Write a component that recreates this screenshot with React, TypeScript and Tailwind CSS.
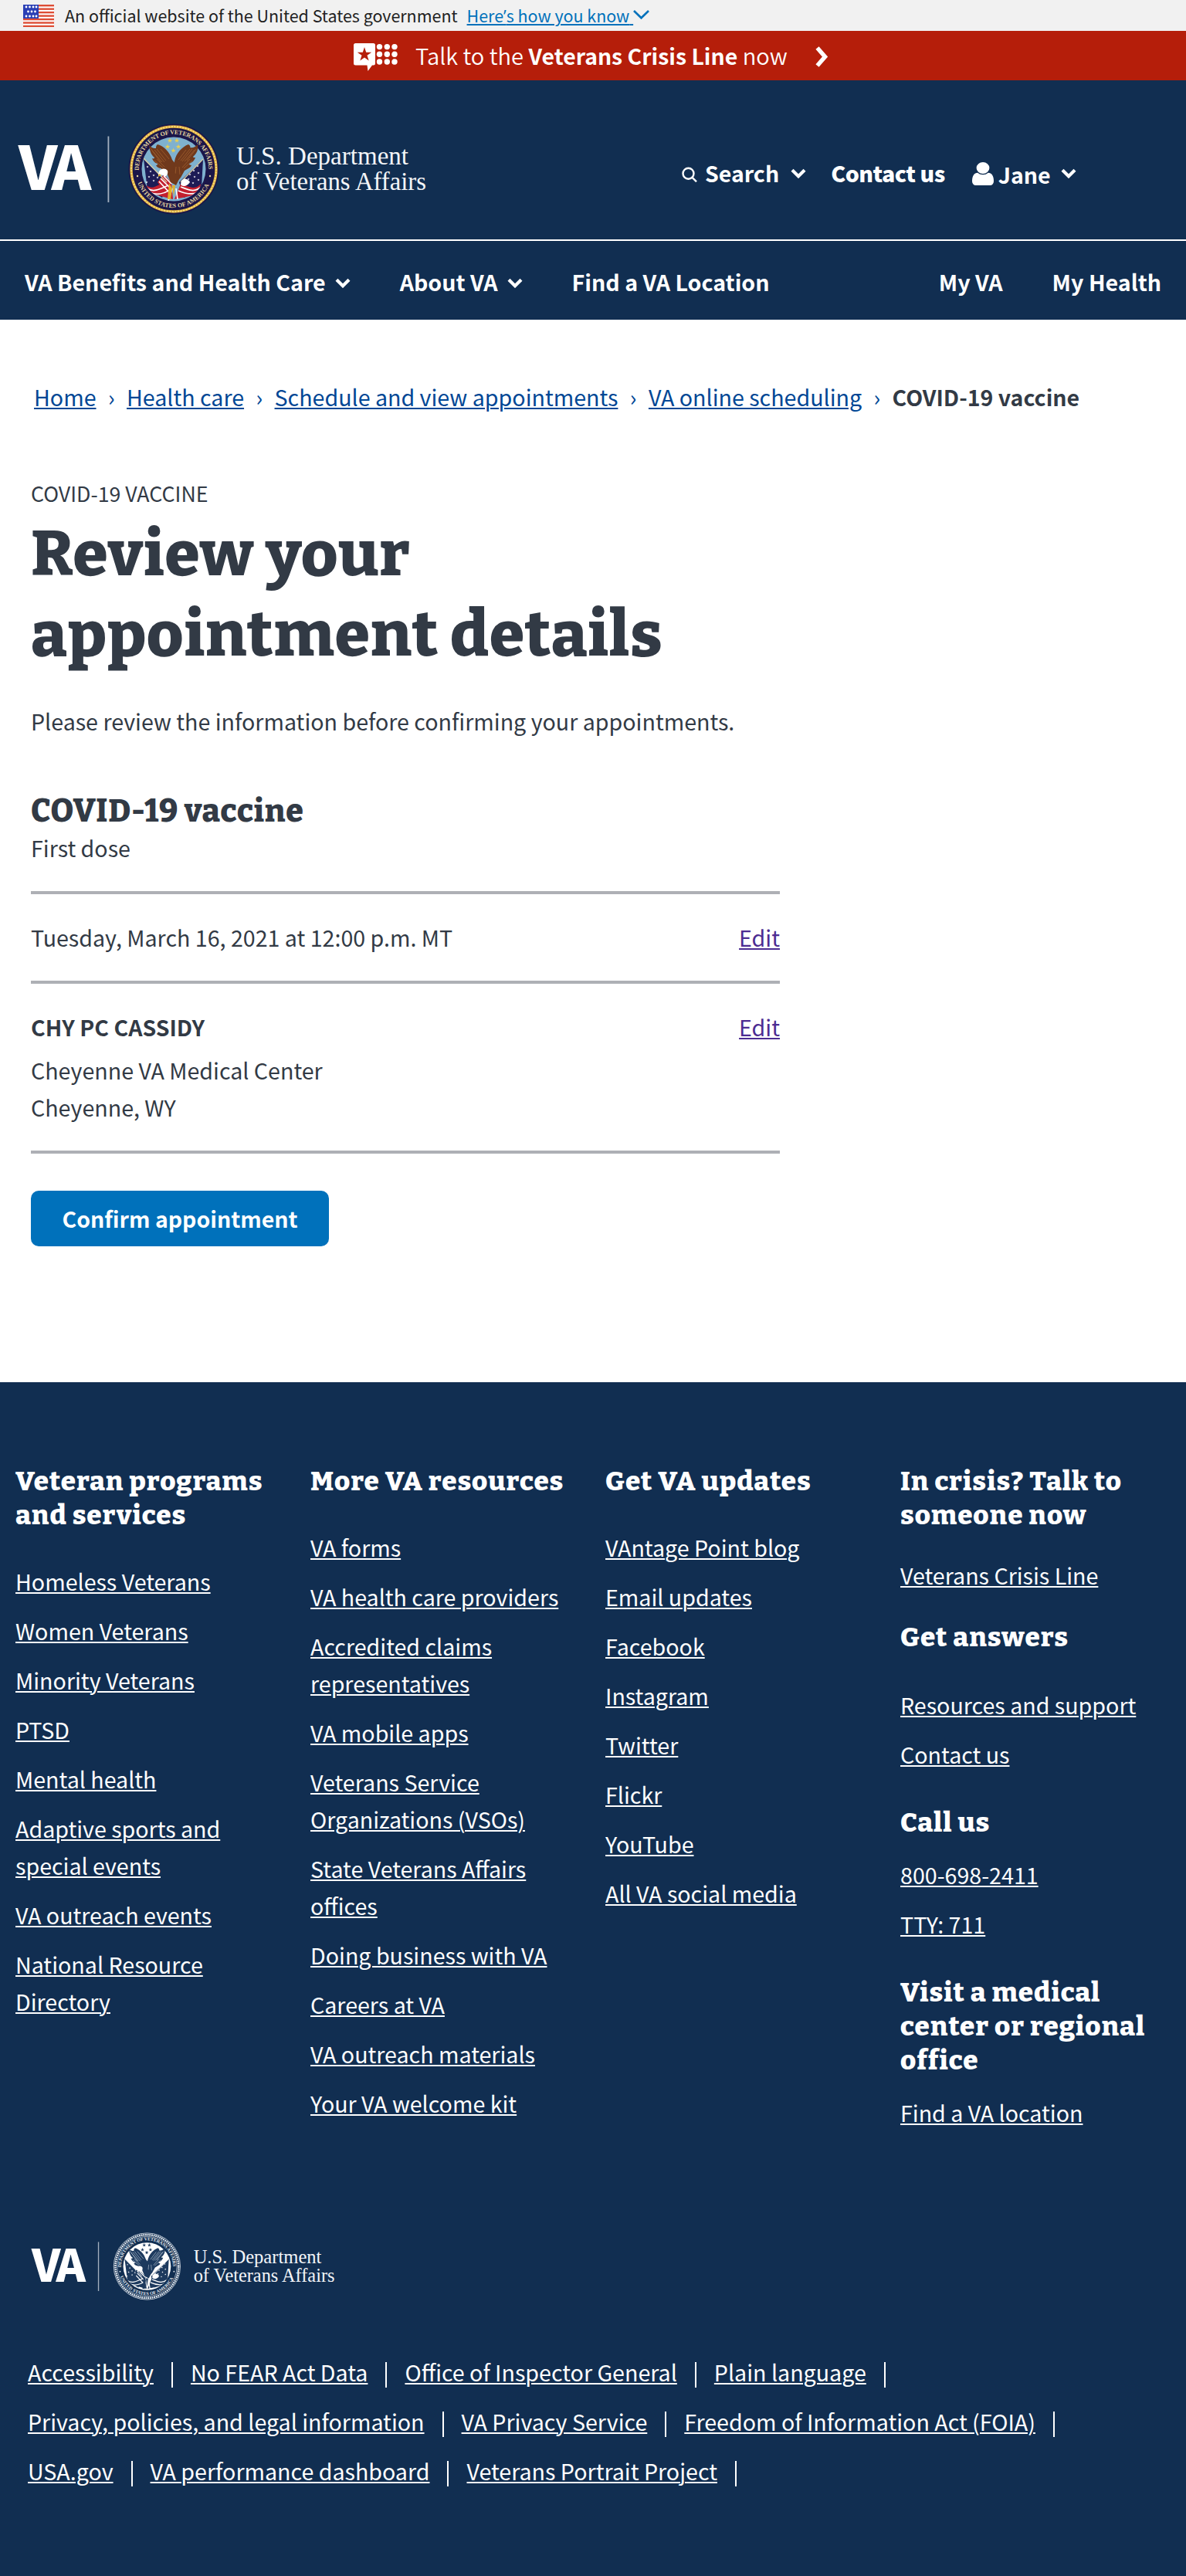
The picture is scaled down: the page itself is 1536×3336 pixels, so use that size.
import { Fragment } from 'react';

const STRIPES = [0, 1, 2, 3, 4, 5, 6];

function UsFlag() {
  return (
    <svg className="h-[29px] w-10" viewBox="0 0 40 29" aria-hidden="true">
      <rect width="40" height="29" fill="#fff" />
      {STRIPES.map((i) => (
        <rect key={i} y={i * 4.46} width="40" height="2.4" fill="#dd4d35" />
      ))}
      <rect width="20" height="18" fill="#2a3fb5" />
      {[3, 9, 15].map((y, r) =>
        (r === 1 ? [6.5, 11, 15.5] : [4, 8.5, 13, 17]).map((x) => (
          <circle key={`${x}-${y}`} cx={x} cy={y} r="1.4" fill="#fff" />
        )),
      )}
    </svg>
  );
}

function Chevron({ className }: { className: string }) {
  return (
    <svg className={className} viewBox="0 0 20 13" fill="none" stroke="currentColor" strokeWidth="4.2" aria-hidden="true">
      <path d="M2 2.2 10 10.2 18 2.2" />
    </svg>
  );
}

function CrisisIcon() {
  return (
    <svg className="h-9 w-[57px]" viewBox="0 0 57 36" fill="#fff" aria-hidden="true">
      <path d="M2.500 0h23A2.500 2.500 0 0 1 28 2.500V26a2.500 2.500 0 0 1-2.500 2.500H24L18.500 36 17.500 28.500H2.500A2.500 2.500 0 0 1 0 26V2.500A2.500 2.500 0 0 1 2.500 0Z" />
      <path fill="#b51e0a" d="m14 5 2.200 6.700h7l-5.700 4.100 2.200 6.800L14 18.400l-5.700 4.200 2.200-6.800L4.800 11.700h7Z" />
      {[4.600, 14.300, 24].map((y) => [33.500, 43.300, 53].map((x) => <circle key={`${x}-${y}`} cx={x} cy={y} r="3.700" />))}
    </svg>
  );
}

function Star({ x, y, s, fill }: { x: number; y: number; s: number; fill: string }) {
  return (
    <path
      transform={`translate(${x} ${y}) scale(${s})`}
      fill={fill}
      d="M0-1 .24-.32.95-.31.38.12.59.81 0 .4-.59.81-.38.12-.95-.31-.24-.32Z"
    />
  );
}

const FEATHERS_LEFT =
  'M27 28C31 32 33 32 36 32 36 30 36 29 38 27 46 29 54 37 57 47L62 53 62 70 52 66C46 62 42 60 43 58 39 58 37 56 36 54 38 54 38 53 38 52 34 51 32 48 31 45 33 46 34 45 34 44 30 41 28 36 27 28Z';
const FEATHERS_RIGHT =
  'M90 27C86 31 84 32 80 31 81 30 80 28 78 27 70 30 62 38 60 49L58 60 62 76 68 70 73 61C78 58 81 57 82 54 80 54 79 53 79 52 84 50 86 47 87 44 85 44 84 44 84 43 89 39 91 34 90 27Z';

function Seal({ mono, id }: { mono?: boolean; id: string }) {
  const ring = mono ? '#112e51' : '#1b1649';
  const gold = mono ? '#e8edf3' : '#dfae3f';
  const letter = mono ? '#e8edf3' : '#e6d9a2';
  const sky = mono ? '#ffffff' : '#7fb1cf';
  const brown = mono ? '#1d3a5e' : '#70391c';
  const feather = mono ? '#c4cfdb' : '#a0602f';
  const navy = mono ? '#1d3a5e' : '#1d1c56';
  const red = mono ? '#1d3a5e' : '#c3202f';
  const star = mono ? '#1d3a5e' : '#e9cf52';
  return (
    <g>
      <circle cx="59" cy="59" r="58.500" fill={ring} />
      <circle cx="59" cy="59" r="58" fill="none" stroke={gold} strokeWidth={mono ? 1 : 0} />
      <circle cx="59" cy="59" r="55" fill="none" stroke={gold} strokeWidth="3.400" strokeDasharray={mono ? '2.400 1.200' : undefined} />
      {!mono && <circle cx="59" cy="59" r="55" fill="none" stroke="#f6dc7c" strokeWidth="2" strokeDasharray="2 1.600" />}
      <circle cx="59" cy="59" r="52" fill="none" stroke={gold} strokeWidth={mono ? 0.8 : 0} />
      <defs>
        <path id={`${id}-top`} d="M14.120 63.700A45.150 45.150 0 1 1 103.900 63.700" />
        <path id={`${id}-bottom`} d="M10 69A50 50 0 0 0 108 69" />
        <clipPath id={`${id}-clip`}>
          <circle cx="59" cy="59" r="41.500" />
        </clipPath>
      </defs>
      <text fill={letter} fontFamily='"Liberation Serif", serif' fontWeight="700" fontSize="7.900">
        <textPath href={`#${id}-top`} startOffset="3" textLength="144">
          DEPARTMENT OF VETERANS AFFAIRS
        </textPath>
      </text>
      <text fill={letter} fontFamily='"Liberation Serif", serif' fontWeight="700" fontSize="7.900">
        <textPath href={`#${id}-bottom`} startOffset="8" textLength="118">
          UNITED STATES OF AMERICA
        </textPath>
      </text>
      <circle cx="12" cy="68" r="1.200" fill={letter} />
      <circle cx="106" cy="68" r="1.200" fill={letter} />
      <circle cx="59" cy="59" r="41.500" fill={sky} />
      <g clipPath={`url(#${id}-clip)`}>
        <path d="M20 46 52 78 44 96C38 92 31 88 25 86Z" fill={navy} />
        <path d="M97 46 66 76 72 96C80 92 88 88 95 83Z" fill={navy} />
        <path d="M24 80C32 88 42 76 52 74L58 98C48 96 38 92 26 90Z" fill={red} />
        <path d="M94 78C86 88 76 80 68 78L60 98C70 96 82 94 92 90Z" fill={red} />
        <path d="M38 76 46 66 56 76 58 98 50 92Z" fill={red} />
        <g stroke="#fff" strokeWidth="1.700" fill="none">
          <path d="M25 84C33 90 43 84 52 80M28 89C36 93 46 91 54 86M42 71 56 85M40 75 55 91M46 68 56 78" />
          <path d="M93 83C85 90 76 85 68 82M91 89C82 93 74 91 65 87M62 84 64 98M57 84 52 100" />
        </g>
        {[[25, 56], [29, 62], [33, 67], [27, 69], [33, 74], [24, 76], [38, 70], [90, 55], [85, 61], [91, 64], [80, 66], [86, 69], [91, 73], [78, 72], [84, 77], [73, 72]].map(([x, y]) => (
          <Star key={`${x}-${y}`} x={x} y={y} s={1.6} fill="#fff" />
        ))}
        <path d="M20 45 50 76M97 46 68 76" stroke={mono ? '#fff' : '#d7cba0'} strokeWidth="1.300" />
      </g>
      <path d={FEATHERS_LEFT} fill={brown} />
      <path d={FEATHERS_RIGHT} fill={brown} />
      <path
        d="M29 32 42 50M31 35 44 50M34 34 47 50M37 33 49 48M42 33 53 46M37 46 47 56M34 48 45 57M86 34 73 49M88 33 76 48M83 33 70 49M80 33 68 48M75 34 65 47M80 46 70 57M83 48 72 58M62 56 61 66M66 56 67 66"
        stroke={feather}
        strokeWidth="0.800"
        fill="none"
      />
      <path d="M50 64C56 62 64 64 67 70L62 80 55 76Z" fill={brown} />
      <path d="M40 62C42 58 48 57 51 61 52 65 50 68 47 69 45 66 42 66 39 68 39 66 39 64 40 62Z" fill="#fff" />
      <path d="M69 74C73 70 78 72 80 76 76 82 70 82 68 79Z" fill="#fff" />
      <path d="M40 65 38.500 69 43 67ZM53 77 51 98H55L57 84ZM57 80 59 94 61 80Z" fill={mono ? '#1d3a5e' : '#e4b02b'} />
      {[[54, 22], [63, 22], [51, 30], [65, 30], [58.5, 35]].map(([x, y]) => (
        <Star key={`${x}-${y}`} x={x} y={y} s={3.4} fill={star} />
      ))}
    </g>
  );
}

/* Wordmark lock-up: VA, rule, department seal and name. */
function VaLogo({ className, mono, id }: { className: string; mono?: boolean; id: string }) {
  return (
    <svg className={className} viewBox="0 0 530 118" role="img" aria-label="U.S. Department of Veterans Affairs">
      <text x="0 42.500" y="86" fill="#fff" fontFamily='"Noto Sans CJK SC", sans-serif' fontWeight="900" fontSize="78.500">
        VA
      </text>
      <rect x="115.500" y="16.500" width="1.800" height="85.500" fill="#a3afbf" />
      <g transform="translate(142 0)">
        <Seal mono={mono} id={id} />
      </g>
      <g fill="#f3f5f8" fontFamily='"Liberation Serif", serif' fontSize="34" fontWeight="400">
        <text x="282" y="53.300" textLength="223" lengthAdjust="spacingAndGlyphs">
          U.S. Department
        </text>
        <text x="282" y="86" textLength="246" lengthAdjust="spacingAndGlyphs">
          of Veterans Affairs
        </text>
      </g>
    </svg>
  );
}

function SearchIcon() {
  return (
    <svg className="h-5 w-5" viewBox="0 0 20 20" fill="none" stroke="#fff" strokeWidth="2.400" aria-hidden="true">
      <circle cx="8.500" cy="8.700" r="7" />
      <path d="M13.300 13.600 19 19.300" />
    </svg>
  );
}

function UserIcon() {
  return (
    <svg className="h-[30px] w-7" viewBox="256 128 1280 1536" preserveAspectRatio="none" fill="#fff" aria-hidden="true">
      <path d="M1536 1399q0 109-62.500 187t-150.500 78h-854q-88 0-150.500-78t-62.500-187q0-85 8.500-160.500t31.500-152 58.500-131 94-89 134.500-34.500q131 128 313 128t313-128q76 0 134.500 34.500t94 89 58.500 131 31.500 152 8.500 160.500zm-256-887q0 159-112.500 271.500t-271.500 112.500-271.500-112.500-112.500-271.500 112.500-271.500 271.500-112.500 271.500 112.500 112.500 271.500z" />
    </svg>
  );
}

const CRUMBS = ['Home', 'Health care', 'Schedule and view appointments', 'VA online scheduling'];

const PROGRAMS = ['Homeless Veterans', 'Women Veterans', 'Minority Veterans', 'PTSD', 'Mental health', 'Adaptive sports and special events', 'VA outreach events', 'National Resource Directory'];
const RESOURCES = ['VA forms', 'VA health care providers', 'Accredited claims representatives', 'VA mobile apps', 'Veterans Service Organizations (VSOs)', 'State Veterans Affairs offices', 'Doing business with VA', 'Careers at VA', 'VA outreach materials', 'Your VA welcome kit'];
const UPDATES = ['VAntage Point blog', 'Email updates', 'Facebook', 'Instagram', 'Twitter', 'Flickr', 'YouTube', 'All VA social media'];
const LEGAL = [
  ['Accessibility', 'No FEAR Act Data', 'Office of Inspector General', 'Plain language'],
  ['Privacy, policies, and legal information', 'VA Privacy Service', 'Freedom of Information Act (FOIA)'],
  ['USA.gov', 'VA performance dashboard', 'Veterans Portrait Project'],
];

function FooterHeading({ children, className = '' }: { children: string; className?: string }) {
  return (
    <h2 className={`font-[Bitter,'DejaVu_Serif_Condensed',serif] text-[35px] leading-[44px] font-extrabold tracking-[0.95px] ${className}`}>
      {children}
    </h2>
  );
}

function LinkList({ items, className = '' }: { items: string[]; className?: string }) {
  return (
    <ul className={`flex flex-col gap-4 ${className}`}>
      {items.map((t) => (
        <li key={t}>
          <a className="underline decoration-2 underline-offset-2">{t}</a>
        </li>
      ))}
    </ul>
  );
}

export default function App() {
  return (
    <div className="flex h-[3336px] w-[1536px] flex-col bg-white font-['Noto_Sans_CJK_SC',sans-serif] text-[28.62px] leading-[48px] text-[#323a45]">
      <header className="flex flex-col text-white">
        <div className="flex h-10 items-start bg-[#f1f1f1] pl-[30px] text-[21.44px] leading-10 text-[#212121]">
          <div className="pt-[6px]">
            <UsFlag />
          </div>
          <span className="ml-[14px] leading-[39px]">An official website of the United States government</span>
          <a className="ml-[12px] flex items-start text-[#0071bb]">
            <span className="leading-[39px] whitespace-pre underline decoration-2 underline-offset-2">
              Here<span className="font-['Open_Sans']">’</span>s how you know{' '}
            </span>
            <svg className="mt-[13px] h-3 w-[21px]" viewBox="0 0 21 12" fill="none" stroke="currentColor" strokeWidth="2.600" aria-hidden="true">
              <path d="M1 1 10.500 10.300 20 1" />
            </svg>
          </a>
        </div>

        <div className="flex h-16 items-start bg-[#b51e0a] pl-[458px]">
          <div className="pt-4">
            <CrisisIcon />
          </div>
          <span className="ml-[23px] pt-[7px] text-[29.1px] font-[350] whitespace-nowrap">
            Talk to the <b className="text-[28.4px] font-bold">Veterans Crisis Line</b> now
          </span>
          <svg className="mt-5 ml-[36px] h-[27px] w-[17px]" viewBox="0 0 17 27" fill="none" stroke="#fff" strokeWidth="5.500" aria-hidden="true">
            <path d="M2.500 2 12.500 13.500 2.500 25" />
          </svg>
        </div>

        <div className="flex h-[206px] items-start bg-[#112e51] pl-6 text-[28.5px] font-bold">
          <VaLogo id="seal-header" className="mt-14 h-[118px] w-[530px] overflow-visible" />
          <div className="ml-[329px] flex items-start pt-24">
            <div className="mt-4">
              <SearchIcon />
            </div>
            <span className="ml-[10px]">Search</span>
            <Chevron className="mt-[18px] ml-[15px] h-[13px] w-5" />
            <a className="ml-8 font-black tracking-[-0.5px]">Contact us</a>
            <div className="mt-[10px] ml-[35px]">
              <UserIcon />
            </div>
            <span className="mt-[2px] ml-[6px]">Jane</span>
            <Chevron className="mt-[18px] ml-[13px] h-[13px] w-5" />
          </div>
        </div>

        <div className="flex h-[104px] items-start border-t-2 border-white bg-[#112e51] pt-[29px] pl-8 text-[28.6px] font-bold">
          <span>VA Benefits and Health Care</span>
          <Chevron className="mt-[19px] ml-3 h-[13px] w-5" />
          <span className="ml-16">About VA</span>
          <Chevron className="mt-[19px] ml-3 h-[13px] w-5" />
          <a className="ml-16">Find a VA Location</a>
          <div className="mr-8 ml-auto flex gap-16">
            <a>My VA</a>
            <a>My Health</a>
          </div>
        </div>
      </header>

      <nav className="mt-[76px] flex pl-11 text-[#004795]">
        {CRUMBS.map((c) => (
          <Fragment key={c}>
            <span className="underline decoration-2 underline-offset-2">{c}</span>
            <span className="w-[39.5px] text-center">›</span>
          </Fragment>
        ))}
        <span className="text-[28.5px] font-bold text-[#323a45]">COVID-19 vaccine</span>
      </nav>

      <main className="mx-10 flex w-[970px] flex-col items-start">
        <span className="mt-[77px] text-[26.75px]">COVID-19 VACCINE</span>
        <h1 className="mt-[3px] font-[Bitter,'DejaVu_Serif_Condensed',serif] text-[82px] leading-[104px] font-extrabold tracking-[0.85px]">
          Review your
          <br />
          appointment details
        </h1>
        <p className="mt-9">Please review the information before confirming your appointments.</p>

        <h2 className="mt-[67px] font-[Bitter,'DejaVu_Serif_Condensed',serif] text-[41px] leading-[52px] font-extrabold tracking-[0.8px]">
          COVID-19 vaccine
        </h2>
        <p className="-mt-[3px]">First dose</p>
        <div className="mt-8 flex h-[120px] w-full justify-between border-y-4 border-[#aeb0b5] pt-8">
          <span>Tuesday, March 16, 2021 at 12:00 p.m. MT</span>
          <a className="text-[#4c2c92] underline decoration-2 underline-offset-2">Edit</a>
        </div>
        <div className="flex h-[220px] w-full justify-between border-b-4 border-[#aeb0b5] pt-8">
          <div className="flex flex-col">
            <span className="text-[28.5px] font-bold">CHY PC CASSIDY</span>
            <span className="mt-2">Cheyenne VA Medical Center</span>
            <span>Cheyenne, WY</span>
          </div>
          <a className="text-[#4c2c92] underline decoration-2 underline-offset-2">Edit</a>
        </div>
        <button className="mt-12 flex h-[72px] w-[386px] items-center justify-center rounded-[10px] bg-[#0071bb] text-[28.5px] font-bold text-white">
          Confirm appointment
        </button>
      </main>

      <footer className="mt-[176px] flex grow flex-col bg-[#112e51] pt-[106px] text-white">
        <div className="grid h-[971px] grid-cols-[382px_382px_382px_350px] pl-5">
          <div className="w-[340px]">
            <FooterHeading>Veteran programs and services</FooterHeading>
            <LinkList items={PROGRAMS} className="mt-10 w-[300px]" />
          </div>
          <div className="w-[345px]">
            <FooterHeading>More VA resources</FooterHeading>
            <LinkList items={RESOURCES} className="mt-10" />
          </div>
          <div>
            <FooterHeading>Get VA updates</FooterHeading>
            <LinkList items={UPDATES} className="mt-10" />
          </div>
          <div className="w-[335px]">
            <FooterHeading>In crisis? Talk to someone now</FooterHeading>
            <LinkList items={['Veterans Crisis Line']} className="mt-8" />
            <FooterHeading className="mt-[34px]">Get answers</FooterHeading>
            <LinkList items={['Resources and support', 'Contact us']} className="mt-[42px]" />
            <FooterHeading className="mt-[42px]">Call us</FooterHeading>
            <LinkList items={['800-698-2411', 'TTY: 711']} className="mt-[22px]" />
            <FooterHeading className="mt-[42px]">Visit a medical center or regional office</FooterHeading>
            <LinkList items={['Find a VA location']} className="mt-[22px]" />
          </div>
        </div>

        <VaLogo mono id="seal-footer" className="mt-6 ml-[41px] h-[88px] w-[394px] overflow-visible" />

        <div className="mt-[69px] flex flex-col gap-4 pl-9">
          {LEGAL.map((row) => (
            <ul key={row[0]} className="flex">
              {row.map((t) => (
                <li key={t} className="mr-[23px] flex items-start">
                  <a className="underline decoration-2 underline-offset-2">{t}</a>
                  <i className="mt-[11px] ml-[23px] h-[33px] w-[2px] bg-white" />
                </li>
              ))}
            </ul>
          ))}
        </div>
      </footer>
    </div>
  );
}
